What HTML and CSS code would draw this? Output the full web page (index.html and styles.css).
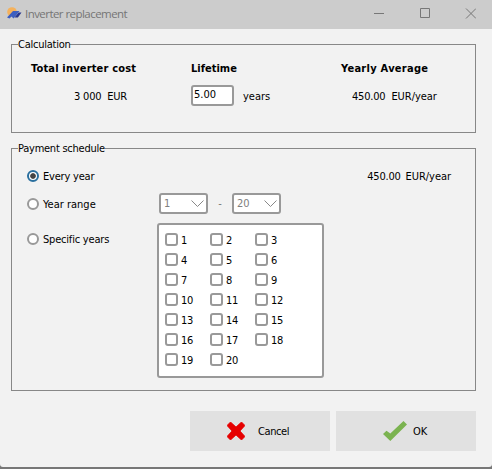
FILE: index.html
```html
<!DOCTYPE html>
<html lang="en">
<head>
<meta charset="utf-8">
<title>Inverter replacement</title>
<link rel="stylesheet" href="styles.css">
</head>
<body>
<div class="window">
  <header class="titlebar">
    <svg class="logo" width="15" height="13" viewBox="0 0 15 13"><circle cx="5" cy="5" r="4.8" fill="#f5b25c"/><path d="M0 10.500 6 4H12.500L6.500 11.500 4.500 9.500 2.500 11.500Z" fill="#3d5fc0"/><path d="M7.500 10.500 11.500 5.500h3l-3.600 5Z" fill="#27378f"/></svg>
    <h1 class="title">Inverter replacement</h1>
    <div class="controls">
      <svg width="102" height="11" viewBox="0 0 102 11" fill="none" stroke="#777"><path d="M0 5.5h10M46.500 .5h9v9h-9zM92 .5l10 10M102 .5l-10 10"/></svg>
    </div>
  </header>
  <main class="content">
    <section class="group calculation">
      <h2 class="legend">Calculation</h2>
      <div class="summary">
        <div class="col">
          <h3 class="heading h-total">Total inverter cost</h3>
          <div class="value total"><span class="t-3000">3 000</span><span class="t-eur">EUR</span></div>
        </div>
        <div class="col">
          <h3 class="heading">Lifetime</h3>
          <div class="value"><span class="input">5.00</span><span>years</span></div>
        </div>
        <div class="col">
          <h3 class="heading h-avg">Yearly Average</h3>
          <div class="value average"><span class="t-450">450.00</span><span class="t-eury">EUR/year</span></div>
        </div>
      </div>
    </section>
    <section class="group schedule">
      <h2 class="legend">Payment schedule</h2>
      <div class="row row-every"><i class="radio checked"></i><span class="t-every">Every year</span>
        <div class="yearly"><span class="t-450">450.00</span><span class="t-eury">EUR/year</span></div></div>
      <div class="row row-range"><i class="radio"></i><span class="option">Year range</span>
        <div class="select"><span>1</span><svg width="13" height="8" viewBox="0 0 13 8"><path d="M.5 .5l6 6 6-6"/></svg></div>
        <span class="dash">-</span>
        <div class="select"><span>20</span><svg width="13" height="8" viewBox="0 0 13 8"><path d="M.5 .5l6 6 6-6"/></svg></div></div>
      <div class="row row-specific"><div class="specific"><i class="radio"></i><span class="t-spec">Specific years</span></div>
        <div class="years">
          <label><i></i>1</label><label><i></i>2</label><label><i></i>3</label>
          <label><i></i>4</label><label><i></i>5</label><label><i></i>6</label>
          <label><i></i>7</label><label><i></i>8</label><label><i></i>9</label>
          <label><i></i>10</label><label><i></i>11</label><label><i></i>12</label>
          <label><i></i>13</label><label><i></i>14</label><label><i></i>15</label>
          <label><i></i>16</label><label><i></i>17</label><label><i></i>18</label>
          <label><i></i>19</label><label><i></i>20</label>
        </div></div>
    </section>
    <footer class="actions">
      <div class="button cancel"><svg width="18" height="18" viewBox="0 0 18 18"><path d="M3.500 0 9 5 14.500 0 18 3.500 13 9 18 14.500 14.500 18 9 13 3.500 18 0 14.500 5 9 0 3.500Z" fill="#e60000" stroke="#e60000" stroke-width=".8"/></svg><span class="t-cancel">Cancel</span></div>
      <div class="button ok"><svg width="24" height="20" viewBox="0 0 24 20"><path d="M0 13 3.500 9.800 7.300 12.600 20.500 0 24 3.500 7.300 20Z" fill="#7bb350"/></svg><span>OK</span></div>
    </footer>
  </main>
</div>
</body>
</html>
```
FILE: styles.css
```css
* { box-sizing: border-box; }
body { margin: 0; background: #777; font: 11px/14px "DejaVu Sans Condensed", "DejaVu Sans", sans-serif; font-stretch: condensed; color: #000; }
h1, h2, h3 { margin: 0; font: inherit; }
span { white-space: nowrap; padding-top: 2px; }
svg { display: block; flex: none; }
.window { height: 467px; background: #f2f2f2; border-radius: 0 0 3px 3px; overflow: hidden; }
.titlebar { height: 29px; background: #ccc; display: flex; padding: 7px 16px 0 7px; color: #7b7b7b; }
.title { font: 11.5px/14px "Open Sans", "Noto Sans", sans-serif; font-stretch: normal; letter-spacing: -.55px; margin-left: 3px; color: #757575; }
.controls { margin: 1px 0 0 auto; }
.content { padding: 15px 16px 0 11px; }
.group { border: 1px solid #888; }
.calculation { height: 89px; }
.schedule { height: 243px; margin-top: 15px; }
.legend { width: max-content; height: 14px; margin: -7px 0 0 6px; background: #f2f2f2; white-space: nowrap; letter-spacing: -.25px; }
.summary { display: grid; grid-template-columns: 160px 150px 1fr; padding: 10px 0 0 19px; }
.heading { font-weight: bold; white-space: nowrap; width: max-content; }
.h-total { letter-spacing: .17px; }
.h-avg { letter-spacing: .27px; }
.value { display: flex; align-items: center; height: 21px; margin-top: 9px; }
.total { padding-left: 43px; gap: 6px; }
.t-3000, .t-450, .t-every, .t-spec { letter-spacing: -.2px; }
.t-eury { letter-spacing: -.05px; }
.t-eur { letter-spacing: -.3px; }
.t-cancel { letter-spacing: -.4px; }
.average { padding-left: 11px; gap: 6px; }
.input { width: 43px; height: 21px; border: 2px solid #999; border-radius: 3px; background: #fff; padding: 1px 0 0 1px; margin-right: 9px; }
.row { display: flex; align-items: center; padding-left: 15px; }
.row-every { height: 26px; margin-top: 7px; }
.row-range { height: 21px; margin-top: 4px; }
.row-specific { align-items: flex-start; margin-top: 9px; }
.radio { width: 12px; height: 12px; border: 2px solid #999; border-radius: 50%; background: #fff; margin-right: 4px; flex: none; }
.checked { border-color: #2a6f9e; background: radial-gradient(circle, #444 0 2.4px, #fff 3.2px); background-origin: border-box; }
.yearly { display: flex; gap: 5px; margin-left: auto; margin-right: 24px; }
.option { width: 116px; }
.select { width: 49px; height: 21px; border: 2px solid #999; border-radius: 3px; background: #fff; display: flex; align-items: center; justify-content: space-between; padding: 0 2px 0 3px; color: #808080; }
.select span { padding-top: 0; }
.select path { fill: none; stroke: #888; }
.dash { width: 24px; padding-top: 0; text-align: center; color: #777; }
.specific { display: flex; align-items: center; width: 130px; height: 14px; margin-top: 9px; }
.years { width: 167px; height: 155px; border: 2px solid #999; border-radius: 3px; background: #fff; display: grid; grid-template-columns: repeat(3, 45px); grid-auto-rows: 20px; align-content: start; padding: 6px 0 0 6px; }
.years label { display: flex; align-items: center; letter-spacing: -.3px; }
.years i { width: 13px; height: 13px; border: 2px solid #999; border-radius: 3px; margin: 0 3px 3px 0; }
.actions { display: flex; justify-content: flex-end; gap: 6px; margin-top: 20px; }
.button { width: 140px; height: 40px; background: #e1e1e1; display: flex; align-items: center; }
.cancel { padding-left: 37px; gap: 13px; }
.ok { padding-left: 47px; gap: 6px; }
```
